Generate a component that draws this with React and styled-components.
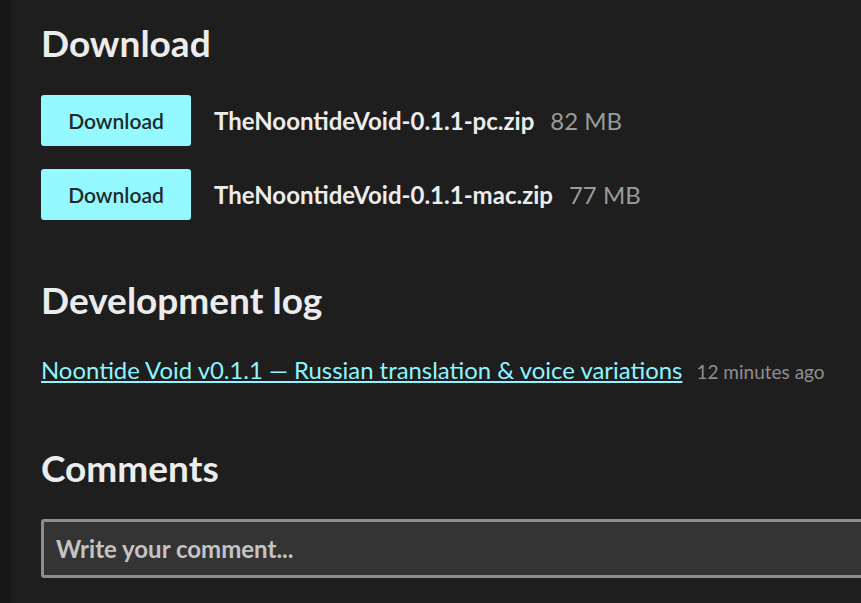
import React from "react";
import styled, { createGlobalStyle } from "styled-components";

const GlobalStyle = createGlobalStyle`
  html, body {
    margin: 0;
    padding: 0;
    background: #171717;
    overflow: hidden;
  }
  body {
    font-family: Lato, "Noto Sans", sans-serif;
  }
`;

const Page = styled.div`
  margin-left: 11px;
  min-height: 603px;
  background: #1e1e1e;
  padding: 21px 0 0 30px;
  width: 900px;
`;

const Heading = styled.h2`
  margin: 0;
  font-size: 37px;
  line-height: 1.2;
  font-weight: 700;
  color: #ececec;
`;

const Section = styled.section`
  margin-top: ${(props) => props.gap || 0}px;
`;

const Downloads = styled.div`
  display: flex;
  flex-direction: column;
  gap: 23px;
  margin-top: 30px;
`;

const Row = styled.div`
  display: flex;
  align-items: center;
  gap: 23px;
`;

const Button = styled.button`
  width: 150px;
  height: 51px;
  border: none;
  border-radius: 3px;
  background: #93f9ff;
  color: #1f2a2b;
  font-family: inherit;
  font-size: 21px;
  font-weight: 600;
  cursor: pointer;
`;

const FileName = styled.span`
  font-size: 24px;
  font-weight: 700;
  color: #ececec;
`;

const Size = styled.span`
  margin-left: 16px;
  font-size: 24px;
  color: #9a9a9a;
`;

const LogRow = styled.div`
  margin-top: 33px;
  display: flex;
  align-items: baseline;
  gap: 14px;
  line-height: 1.2;
`;

const LogLink = styled.a`
  font-size: 23.9px;
  color: #8ff4ff;
  text-decoration: underline;
  text-underline-offset: 2px;
  cursor: pointer;
`;

const Time = styled.span`
  font-size: 19px;
  color: #8f8f8f;
`;

const CommentBox = styled.textarea`
  display: block;
  box-sizing: border-box;
  margin-top: 28px;
  width: 860px;
  height: 59px;
  padding: 13px 12px;
  border: 3px solid #8e8e8e;
  border-radius: 3px;
  background: #343434;
  color: #e0e0e0;
  font-family: inherit;
  font-size: 24px;
  font-weight: 700;
  line-height: 1.2;
  resize: none;
  outline: none;
  overflow: hidden;

  &::placeholder {
    color: #c4c4c4;
  }
`;

const files = [
  { name: "TheNoontideVoid-0.1.1-pc.zip", size: "82 MB" },
  { name: "TheNoontideVoid-0.1.1-mac.zip", size: "77 MB" },
];

export default function App() {
  return (
    <>
      <GlobalStyle />
      <Page>
        <Section>
          <Heading>Download</Heading>
          <Downloads>
            {files.map((file) => (
              <Row key={file.name}>
                <Button>Download</Button>
                <div>
                  <FileName>{file.name}</FileName>
                  <Size>{file.size}</Size>
                </div>
              </Row>
            ))}
          </Downloads>
        </Section>

        <Section gap={58}>
          <Heading>Development log</Heading>
          <LogRow>
            <LogLink>
              Noontide Void v0.1.1 — Russian translation &amp; voice variations
            </LogLink>
            <Time>12 minutes ago</Time>
          </LogRow>
        </Section>

        <Section gap={62}>
          <Heading>Comments</Heading>
          <CommentBox placeholder="Write your comment..." rows={1} />
        </Section>
      </Page>
    </>
  );
}
